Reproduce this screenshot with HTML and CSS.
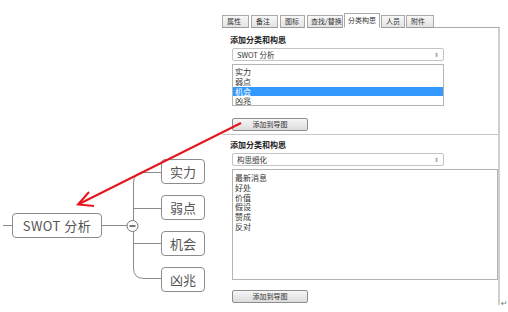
FILE: index.html
```html
<!DOCTYPE html>
<html lang="zh">

<head>
    <meta charset="UTF-8">
    <title>分类构思</title>
    <link rel="stylesheet" href="styles.css">
</head>

<body>
    <div class="page">
        <div class="map">
            <svg class="links" width="222" height="312" viewBox="0 0 222 312">
                <path d="M3 225.5H12" />
                <path d="M102 225.5H127" />
                <path d="M161 172.5H144Q133.5 172.5 133.5 183V268Q133.5 278.5 144 278.5H161" />
                <path d="M133.5 208.5H161" />
                <path d="M133.5 243.5H161" />
                <circle cx="132.5" cy="226" r="5.5" class="fold" />
                <path d="M129.5 226H135.5" class="minus" />
            </svg>
            <div class="node root">SWOT 分析</div>
            <div class="node child c1">实力</div>
            <div class="node child c2">弱点</div>
            <div class="node child c3">机会</div>
            <div class="node child c4">凶兆</div>
        </div>

        <div class="panel">
            <div class="tabs">
                <div class="tab w26">属性</div>
                <div class="tab w26">备注</div>
                <div class="tab w25">图标</div>
                <div class="tab w36">查找/替换</div>
                <div class="tab w36 active">分类构思</div>
                <div class="tab w24">人员</div>
                <div class="tab w28">附件</div>
                <div class="tab-rest"></div>
            </div>
            <div class="panel-body">
                <section class="group">
                    <h2>添加分类和构思</h2>
                    <div class="select">SWOT 分析<span class="spin">⬍</span></div>
                    <ul class="listbox short">
                        <li>实力</li>
                        <li>弱点</li>
                        <li class="selected">机会</li>
                        <li>凶兆</li>
                    </ul>
                    <button class="add-btn">添加到导图</button>
                </section>
                <section class="group second">
                    <h2>添加分类和构思</h2>
                    <div class="select">构思细化<span class="spin">⬍</span></div>
                    <ul class="listbox tall">
                        <li>最新消息</li>
                        <li>好处</li>
                        <li>价值</li>
                        <li>假设</li>
                        <li>赞成</li>
                        <li>反对</li>
                    </ul>
                    <button class="add-btn">添加到导图</button>
                </section>
            </div>
        </div>
        <div class="return-mark">↵</div>
    </div>

    <svg class="pointer" width="508" height="312" viewBox="0 0 508 312">
        <path d="M241 123L79 204" />
        <path d="M89 192L78 204.5L94 206" />
    </svg>
</body>

</html>
```

FILE: styles.css
```css
body {
    margin: 0;
    width: 508px;
    height: 312px;
    overflow: hidden;
    background-color: #fff;
    font-family: 'Noto Sans CJK SC', 'DejaVu Sans', sans-serif;
    color: #333;
    position: relative;
}

.page {
    display: flex;
    height: 312px;
}

/* 导图 */
.map {
    position: relative;
    width: 222px;
    flex: none;
}

.links {
    position: absolute;
    left: 0;
    top: 0;
}

.links path {
    fill: none;
    stroke: #8a8a8a;
    stroke-width: 1;
}

.links .fold {
    fill: #fff;
    stroke: #777;
    stroke-width: 1;
}

.links .minus {
    stroke: #555;
    stroke-width: 1.6;
}

.node {
    position: absolute;
    box-sizing: border-box;
    border: 1px solid #8c8c8c;
    border-radius: 4px;
    background-color: #fff;
    color: #555;
    font-family: 'Noto Sans CJK SC', sans-serif;
    font-size: 13px;
    display: flex;
    align-items: center;
    justify-content: center;
}

.root {
    left: 12px;
    top: 213px;
    width: 90px;
    height: 25px;
    letter-spacing: 0.5px;
}

.child {
    left: 161px;
    width: 44px;
    height: 25px;
}

.c1 { top: 159px; }
.c2 { top: 195px; }
.c3 { top: 231px; }
.c4 { top: 267px; }

/* 面板 */
.panel {
    width: 278px;
    flex: none;
    padding-top: 13px;
    display: flex;
    flex-direction: column;
}

.tabs {
    display: flex;
    align-items: flex-end;
    height: 15px;
}

.tab {
    box-sizing: border-box;
    height: 13px;
    margin-right: 1px;
    padding-left: 4px;
    border: 1px solid #a9a9a9;
    border-bottom-color: #9a9a9a;
    background: linear-gradient(#f7f7f7, #e3e3e3);
    font-size: 7px;
    line-height: 11px;
    white-space: nowrap;
    overflow: hidden;
    color: #333;
}

.tab.active {
    height: 15px;
    line-height: 13px;
    background: #fff;
    border-bottom-color: #fff;
}

.w24 { width: 24px; }
.w25 { width: 25px; margin-right: 2px; }
.w26 { width: 27px; margin-right: 2px; }
.w28 { width: 28px; }
.w36 { width: 36px; padding-left: 3px; }

.tab-rest {
    flex: 1;
    height: 0;
    border-bottom: 1px solid #a9a9a9;
    border-right: 2px solid #cfcfcf;
    margin-left: -1px;
}

.panel-body {
    flex: 1;
    margin-bottom: 7px;
    border-right: 2px solid #cfcfcf;
    padding-top: 6px;
}

.group {
    padding-left: 10px;
}

.group.second {
    margin-top: 3px;
    border-top: 1px solid #c9c9c9;
    padding-top: 4px;
}

h2 {
    margin: 0 0 0 -2px;
    font-size: 8px;
    line-height: 11px;
    font-weight: 700;
    color: #222;
}

.select {
    position: relative;
    box-sizing: border-box;
    width: 212px;
    height: 13px;
    margin-top: 3px;
    padding-left: 4px;
    border: 1px solid #c4c4c4;
    border-radius: 2px;
    font-size: 7.5px;
    line-height: 11px;
    color: #333;
}

.spin {
    position: absolute;
    right: 4px;
    top: 0;
    font-size: 6px;
    color: #aaa;
}

.listbox {
    list-style: none;
    margin: 3px 0 0;
    padding: 3px 0 0;
    box-sizing: border-box;
    width: 212px;
    border: 1px solid #b4b4b4;
    font-size: 8px;
    line-height: 9.8px;
    color: #333;
}

.listbox li {
    padding-left: 2px;
}

.listbox.short {
    height: 42px;
    padding-top: 2px;
}

.listbox.tall {
    width: 266px;
    height: 111px;
}

.listbox li.selected {
    background-color: #3399ff;
    color: #fff;
}

.add-btn {
    display: block;
    box-sizing: border-box;
    width: 76px;
    height: 13px;
    padding: 0;
    margin-top: 12px;
    border: 1px solid #8e8e8e;
    border-radius: 2px;
    background: linear-gradient(#f6f6f6, #dcdcdc);
    font-family: 'Noto Sans CJK SC', sans-serif;
    font-size: 7px;
    line-height: 11px;
    color: #333;
}

.second .add-btn {
    margin-top: 10px;
}

.return-mark {
    align-self: flex-end;
    margin: 0 0 5px 1px;
    font-size: 8px;
    line-height: 8px;
    color: #777;
}

/* 红色箭头 */
.pointer {
    position: absolute;
    left: 0;
    top: 0;
    pointer-events: none;
}

.pointer path {
    fill: none;
    stroke: #e8141c;
    stroke-width: 2;
}
```
